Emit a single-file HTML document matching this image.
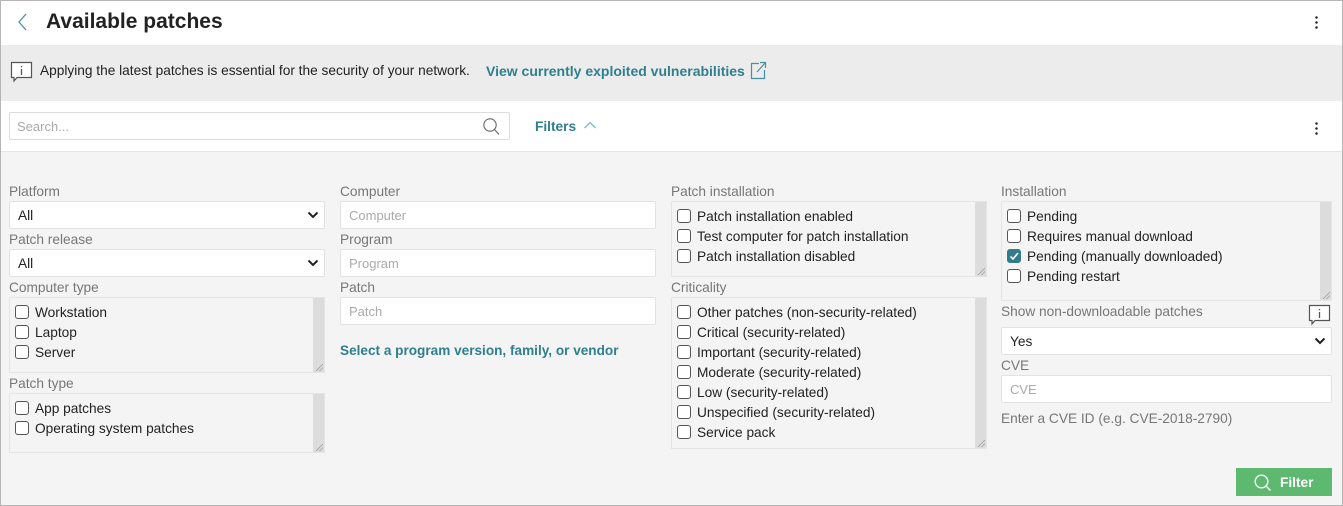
<!DOCTYPE html>
<html><head><style>
*{box-sizing:border-box;margin:0;padding:0}
body{width:1343px;height:506px;overflow:hidden;font-family:"Liberation Sans",sans-serif;font-size:13.7px;color:#222;background:#fff}
.frame{position:absolute;left:0;top:0;width:1343px;height:506px;border:1px solid #b5b5b5}
.a{position:absolute}
.lbl{position:absolute;color:#777;font-size:13.7px}
.sel,.inp{position:absolute;height:28px;background:#fff;border:1px solid #e2e2e2;border-radius:2px;padding:6px 8px;font-size:13.7px}
.inp{color:#aaa;font-size:13px}
.sel svg{position:absolute;right:5px;top:9px}
.box{position:absolute;background:#f4f4f4;border:1px solid #e4e4e4}
.box .sb{position:absolute;right:0;top:0;bottom:0;width:11px;background:#dcdcdc}
.box .gr{position:absolute;right:1px;bottom:1px;width:7px;height:7px;background:linear-gradient(135deg,transparent 45%,#888 50%,transparent 55%,transparent 70%,#888 75%,transparent 80%)}
.row{height:20px;line-height:20px;padding-left:5px;white-space:nowrap;color:#222}
.cb{display:inline-block;width:14px;height:14px;border:1px solid #555;border-radius:3px;background:#fff;vertical-align:-2px;margin-right:6px;position:relative}
.cb.on{background:#337c8c;border-color:#337c8c}
</style></head><body>
<div class="frame"></div>
<svg class="a" style="left:17px;top:12px" width="12" height="20"><path d="M9 2 L2 10 L9 18" stroke="#4a8fa0" stroke-width="1.3" fill="none"/></svg>
<div class="a" style="left:46px;top:10px;font-size:21px;font-weight:bold;color:#222">Available patches</div>
<div class="a" style="left:1315px;top:15px;width:3px;height:14px;background:radial-gradient(circle,#222 1.1px,transparent 1.4px) 0 0/3px 5px"></div>
<div class="a" style="left:1px;top:45px;width:1341px;height:56px;background:#ececec"></div>
<svg class="a" style="left:10px;top:61px" width="24" height="22"><path d="M1.5 1.5 H21.5 V16.5 H7 L4 20 V16.5 H1.5 Z" stroke="#555" stroke-width="1.2" fill="#fff"/><path d="M11.5 5 V6.3 M11.5 8 V14" stroke="#555" stroke-width="1.3"/></svg>
<div class="a" style="left:40px;top:63px;color:#222">Applying the latest patches is essential for the security of your network.</div>
<div class="a" style="left:486px;top:63px;color:#2f7f8e;font-weight:bold;font-size:14px">View currently exploited vulnerabilities</div>
<svg class="a" style="left:749px;top:60px" width="18" height="20"><path d="M10 3.5 H2.5 V18.5 H15.5 V10" stroke="#4a8fa0" stroke-width="1.2" fill="none"/><path d="M8 12 L16 3 M11 2.5 H16.5 V8" stroke="#4a8fa0" stroke-width="1.2" fill="none"/></svg>
<div class="a" style="left:9px;top:112px;width:501px;height:28px;border:1px solid #dcdcdc;border-radius:2px;background:#fff"></div>
<div class="a" style="left:17px;top:119px;color:#aaa;font-size:13px">Search...</div>
<svg class="a" style="left:482px;top:117px" width="18" height="19"><circle cx="8" cy="8" r="6.2" stroke="#666" stroke-width="1.1" fill="none"/><path d="M12.5 12.5 L17 17.5" stroke="#666" stroke-width="1.1"/></svg>
<div class="a" style="left:535px;top:119px;color:#2f7f8e;font-weight:bold">Filters</div>
<svg class="a" style="left:583px;top:120px" width="14" height="10"><path d="M1.5 8 L7 2.5 L12.5 8" stroke="#7bb" stroke-width="1.3" fill="none"/></svg>
<div class="a" style="left:1315px;top:121px;width:3px;height:14px;background:radial-gradient(circle,#222 1.1px,transparent 1.4px) 0 0/3px 5px"></div>
<div class="a" style="left:1px;top:151px;width:1341px;height:354px;background:#f4f4f4;border-top:1px solid #e6e6e6"></div>

<div class="lbl" style="left:9px;top:184px">Platform</div>
<div class="sel" style="left:9px;top:201px;width:316px">All<svg width="12" height="8"><path d="M1.5 1.5 L6 6 L10.5 1.5" stroke="#222" stroke-width="2" fill="none"/></svg></div>
<div class="lbl" style="left:9px;top:232px">Patch release</div>
<div class="sel" style="left:9px;top:249px;width:316px">All<svg width="12" height="8"><path d="M1.5 1.5 L6 6 L10.5 1.5" stroke="#222" stroke-width="2" fill="none"/></svg></div>
<div class="lbl" style="left:9px;top:280px">Computer type</div>
<div class="box" style="left:9px;top:297px;width:316px;height:76px;padding-top:5px"><div class="sb"></div><div class="gr"></div>
<div class="row"><span class="cb"></span>Workstation</div><div class="row"><span class="cb"></span>Laptop</div><div class="row"><span class="cb"></span>Server</div></div>
<div class="lbl" style="left:9px;top:376px">Patch type</div>
<div class="box" style="left:9px;top:393px;width:316px;height:60px;padding-top:5px"><div class="sb"></div><div class="gr"></div>
<div class="row"><span class="cb"></span>App patches</div><div class="row"><span class="cb"></span>Operating system patches</div></div>

<div class="lbl" style="left:340px;top:184px">Computer</div>
<div class="inp" style="left:340px;top:201px;width:316px">Computer</div>
<div class="lbl" style="left:340px;top:232px">Program</div>
<div class="inp" style="left:340px;top:249px;width:316px">Program</div>
<div class="lbl" style="left:340px;top:280px">Patch</div>
<div class="inp" style="left:340px;top:297px;width:316px">Patch</div>
<div class="a" style="left:340px;top:343px;color:#2f7f8e;font-weight:bold;font-size:13.6px">Select a program version, family, or vendor</div>

<div class="lbl" style="left:671px;top:184px">Patch installation</div>
<div class="box" style="left:671px;top:201px;width:316px;height:76px;padding-top:5px"><div class="sb"></div><div class="gr"></div>
<div class="row"><span class="cb"></span>Patch installation enabled</div><div class="row"><span class="cb"></span>Test computer for patch installation</div><div class="row"><span class="cb"></span>Patch installation disabled</div></div>
<div class="lbl" style="left:671px;top:280px">Criticality</div>
<div class="box" style="left:671px;top:297px;width:316px;height:152px;padding-top:5px"><div class="sb"></div><div class="gr"></div>
<div class="row"><span class="cb"></span>Other patches (non-security-related)</div>
<div class="row"><span class="cb"></span>Critical (security-related)</div>
<div class="row"><span class="cb"></span>Important (security-related)</div>
<div class="row"><span class="cb"></span>Moderate (security-related)</div>
<div class="row"><span class="cb"></span>Low (security-related)</div>
<div class="row"><span class="cb"></span>Unspecified (security-related)</div>
<div class="row"><span class="cb"></span>Service pack</div></div>

<div class="lbl" style="left:1001px;top:184px">Installation</div>
<div class="box" style="left:1001px;top:201px;width:331px;height:100px;padding-top:5px"><div class="sb"></div><div class="gr"></div>
<div class="row"><span class="cb"></span>Pending</div>
<div class="row"><span class="cb"></span>Requires manual download</div>
<div class="row"><span class="cb on"><svg width="12" height="12" style="position:absolute;left:0;top:0"><path d="M2.5 6.5 L5 9 L10 3" stroke="#fff" stroke-width="1.6" fill="none"/></svg></span>Pending (manually downloaded)</div>
<div class="row"><span class="cb"></span>Pending restart</div></div>
<div class="lbl" style="left:1001px;top:304px">Show non-downloadable patches</div>
<svg class="a" style="left:1308px;top:304px" width="24" height="22"><path d="M1.5 1.5 H21.5 V16.5 H7 L4 20 V16.5 H1.5 Z" stroke="#555" stroke-width="1.2" fill="#fff"/><path d="M11.5 5 V6.3 M11.5 8 V14" stroke="#555" stroke-width="1.3"/></svg>
<div class="sel" style="left:1001px;top:327px;width:331px">Yes<svg width="12" height="8"><path d="M1.5 1.5 L6 6 L10.5 1.5" stroke="#222" stroke-width="2" fill="none"/></svg></div>
<div class="lbl" style="left:1001px;top:358px">CVE</div>
<div class="inp" style="left:1001px;top:375px;width:331px">CVE</div>
<div class="lbl" style="left:1001px;top:411px">Enter a CVE ID (e.g. CVE-2018-2790)</div>
<div class="a" style="left:1236px;top:468px;width:96px;height:28px;background:#5cb96f"></div>
<svg class="a" style="left:1253px;top:473px" width="20" height="20"><circle cx="8.5" cy="8.5" r="6.3" stroke="#fff" stroke-width="1.4" fill="none"/><path d="M13 13 L17.5 17.5" stroke="#fff" stroke-width="1.5"/></svg>
<div class="a" style="left:1280px;top:475px;color:#fff;font-weight:bold">Filter</div>
</body></html>
